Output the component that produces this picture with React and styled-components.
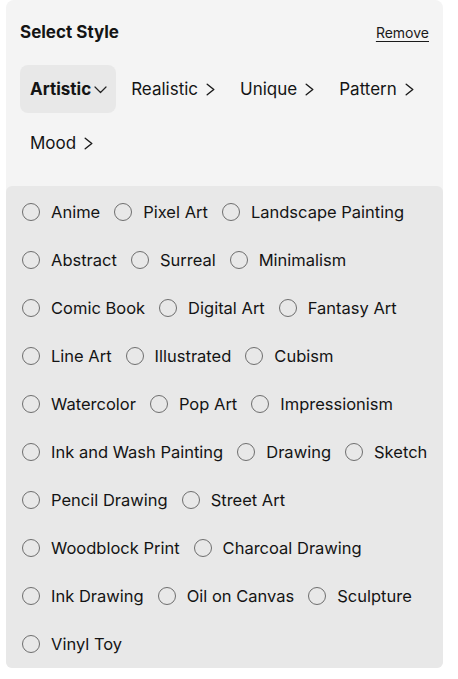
import React from 'react';
import styled, { createGlobalStyle } from 'styled-components';

const GlobalStyle = createGlobalStyle`
  body {
    margin: 0;
    background: #ffffff;
    font-family: 'Inter', 'Noto Sans', sans-serif;
    color: #141414;
  }
`;

const categories = [
  { label: 'Artistic', active: true },
  { label: 'Realistic' },
  { label: 'Unique' },
  { label: 'Pattern' },
  { label: 'Mood' },
];

const styles = [
  ['Anime', 'Pixel Art', 'Landscape Painting'],
  ['Abstract', 'Surreal', 'Minimalism'],
  ['Comic Book', 'Digital Art', 'Fantasy Art'],
  ['Line Art', 'Illustrated', 'Cubism'],
  ['Watercolor', 'Pop Art', 'Impressionism'],
  ['Ink and Wash Painting', 'Drawing', 'Sketch'],
  ['Pencil Drawing', 'Street Art'],
  ['Woodblock Print', 'Charcoal Drawing'],
  ['Ink Drawing', 'Oil on Canvas', 'Sculpture'],
  ['Vinyl Toy'],
];

const ChevronDown = () => (
  <svg width="13" height="13" viewBox="0 0 13 13" fill="none">
    <path d="M1 4 L6.5 9.5 L12 4" stroke="#222" strokeWidth="1.2" strokeLinecap="round" strokeLinejoin="round" />
  </svg>
);

const ChevronRight = () => (
  <svg width="9" height="13" viewBox="0 0 9 13" fill="none">
    <path d="M1.2 1.2 L7.8 6.5 L1.2 11.8" stroke="#1a1a1a" strokeWidth="1.4" strokeLinecap="round" strokeLinejoin="round" />
  </svg>
);

const App = () => {
  return (
    <>
      <GlobalStyle />
      <Panel>
        <Header>
          <Title>Select Style</Title>
          <RemoveLink>Remove</RemoveLink>
        </Header>
        <Tabs>
          {categories.map((c) => (
            <Tab key={c.label} $active={c.active}>
              {c.label}
              {c.active ? <ChevronDown /> : <ChevronRight />}
            </Tab>
          ))}
        </Tabs>
        <List>
          {styles.map((row, i) => (
            <Row key={i}>
              {row.map((s) => (
                <Option key={s}>
                  <Radio />
                  {s}
                </Option>
              ))}
            </Row>
          ))}
        </List>
      </Panel>
    </>
  );
};

const Panel = styled.div`
  margin-left: 6px;
  width: 437px;
  background: #f4f4f4;
  border-radius: 8px 8px 6px 6px;
  display: flex;
  flex-direction: column;
`;

const Header = styled.div`
  display: flex;
  align-items: center;
  justify-content: space-between;
  height: 64px;
  padding: 0 14px;
`;

const Title = styled.span`
  font-size: 17px;
  font-weight: 700;
`;

const RemoveLink = styled.span`
  font-size: 14px;
  text-decoration: underline;
  text-underline-offset: 3px;
  color: #1a1a1a;
`;

const Tabs = styled.div`
  display: flex;
  flex-wrap: wrap;
  column-gap: 5px;
  row-gap: 6px;
  padding: 1px 14px 19px;
`;

const Tab = styled.div`
  display: flex;
  align-items: center;
  gap: ${(p) => (p.$active ? '3px' : '8px')};
  height: 48px;
  padding: 0 ${(p) => (p.$active ? '9px' : '10px')} 0 10px;
  border-radius: 8px;
  font-size: 17px;
  font-weight: ${(p) => (p.$active ? 700 : 400)};
  background: ${(p) => (p.$active ? '#e8e8e8' : 'transparent')};
`;

const List = styled.div`
  background: #e8e8e8;
  border-radius: 6px;
  padding: 2px 16px 0;
`;

const Row = styled.div`
  display: flex;
  align-items: center;
  gap: 14px;
  height: 48px;
`;

const Option = styled.label`
  display: flex;
  align-items: center;
  gap: 11px;
  font-size: 16.5px;
  white-space: nowrap;
`;

const Radio = styled.span`
  width: 18px;
  height: 18px;
  box-sizing: border-box;
  border: 1.2px solid #6e6e6e;
  border-radius: 50%;
  flex-shrink: 0;
`;

export default App;
